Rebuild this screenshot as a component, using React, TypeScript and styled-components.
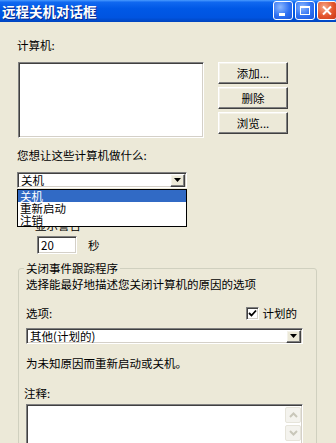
import React from "react";
import styled, { createGlobalStyle } from "styled-components";

const Global = createGlobalStyle`
  html, body { margin: 0; padding: 0; background: #ECE9D8; }
  body {
    font-family: "Noto Sans CJK SC", "Liberation Sans", sans-serif;
    font-size: 11.5px;
    color: #000;
  }
  * { box-sizing: border-box; }
`;

const Window = styled.div`
  width: 336px;
  height: 443px;
  overflow: hidden;
  background: #ECE9D8;
  display: flex;
  flex-direction: column;
`;

const TitleBar = styled.div`
  height: 22px;
  flex: none;
  display: flex;
  justify-content: space-between;
  padding-left: 2px;
  background: linear-gradient(
    to bottom,
    #4A9BFF 0%,
    #1068F0 10%,
    #0058E6 40%,
    #0054E0 80%,
    #0044BE 100%
  );
`;

const Title = styled.span`
  color: #fff;
  font-weight: bold;
  font-size: 13.5px;
  line-height: 22px;
  text-shadow: 1px 1px #0A2A8A;
  white-space: nowrap;
`;

const Controls = styled.div`
  display: flex;
  gap: 2px;
  margin-top: 1px;
  margin-right: -1px;
`;

const CtlButton = styled.div<{ $close?: boolean }>`
  width: 20px;
  height: 19px;
  border: 1px solid #fff;
  border-radius: 3px;
  display: flex;
  align-items: center;
  justify-content: center;
  background: ${(p) =>
    p.$close
      ? "radial-gradient(circle at 35% 30%, #F6A888 0%, #E4552C 55%, #C8391A 100%)"
      : "radial-gradient(circle at 35% 30%, #8CB8FF 0%, #2E70F2 55%, #1A56DA 100%)"};
`;

const Body = styled.div`
  padding: 16px 0 0 17px;
  display: flex;
  flex-direction: column;
`;

const Label = styled.div<{ $mt?: number; $ml?: number }>`
  height: 14px;
  line-height: 14px;
  white-space: nowrap;
  margin-top: ${(p) => p.$mt ?? 0}px;
  margin-left: ${(p) => p.$ml ?? 0}px;
`;

const sunken = `
  border: 1px solid;
  border-color: #808080 #fff #fff #808080;
  box-shadow: inset 1px 1px #404040, inset -1px -1px #D4D0C8;
  background: #fff;
`;

const raised = `
  border: 1px solid;
  border-color: #fff #404040 #404040 #fff;
  box-shadow: inset -1px -1px #808080, inset 1px 1px #F4F2EA;
  background: #ECE9D8;
`;

const ListRow = styled.div`
  display: flex;
  margin-top: 10px;
  margin-left: 1px;
`;

const ListBox = styled.div`
  ${sunken}
  width: 186px;
  height: 76px;
`;

const ButtonColumn = styled.div`
  display: flex;
  flex-direction: column;
  gap: 3px;
  margin-left: 14px;
`;

const PushButton = styled.div`
  ${raised}
  width: 70px;
  height: 22px;
  display: flex;
  align-items: center;
  justify-content: center;
  line-height: 14px;
  white-space: nowrap;
`;

const ComboWrap = styled.div<{ $mt?: number; $w: number }>`
  position: relative;
  width: ${(p) => p.$w}px;
  margin-top: ${(p) => p.$mt ?? 0}px;
`;

const Combo = styled.div`
  ${sunken}
  height: 16px;
  display: flex;
  align-items: center;
  padding-left: 3px;
  padding-right: 1px;
  line-height: 14px;
  white-space: nowrap;
`;

const ComboText = styled.span`
  flex: 1;
`;

const ArrowButton = styled.div`
  ${raised}
  width: 15px;
  height: 13px;
  display: flex;
  align-items: center;
  justify-content: center;
`;

const DropList = styled.div`
  position: absolute;
  left: 0;
  top: calc(100% + 1px);
  width: 100%;
  border: 1px solid #000;
  background: #fff;
  z-index: 2;
`;

const DropItem = styled.div<{ $active?: boolean }>`
  height: 12px;
  line-height: 12px;
  padding-left: 2px;
  white-space: nowrap;
  background: ${(p) => (p.$active ? "#316AC5" : "#fff")};
  color: ${(p) => (p.$active ? "#fff" : "#000")};
`;

const SecondsRow = styled.div`
  display: flex;
  align-items: center;
  margin-top: 4px;
  margin-left: 20px;
`;

const NumberBox = styled.div`
  ${sunken}
  width: 40px;
  height: 18px;
  line-height: 14px;
  padding: 1px 3px;
`;

const Unit = styled.span`
  margin-left: 11px;
  line-height: 14px;
`;

const Group = styled.fieldset`
  margin: 7px 0 0 1px;
  width: 299px;
  padding: 0 13px 0 7px;
  border: 1px solid #D0D0BF;
  border-radius: 3px;
  display: flex;
  flex-direction: column;
  min-width: 0;
`;

const Legend = styled.legend`
  padding: 0 2px;
  margin-left: -2px;
  line-height: 14px;
  height: 14px;
  white-space: nowrap;
`;

const SplitRow = styled.div`
  display: flex;
  justify-content: space-between;
  align-items: center;
  margin-top: 15px;
  padding-right: 6px;
  height: 14px;
`;

const CheckGroup = styled.div`
  display: flex;
  align-items: center;
  gap: 4px;
  line-height: 14px;
`;

const CheckBox = styled.div`
  ${sunken}
  width: 13px;
  height: 13px;
  display: flex;
  align-items: center;
  justify-content: center;
`;

const NoteArea = styled.div`
  ${sunken}
  margin-top: 4px;
  height: 44px;
  display: flex;
  justify-content: flex-end;
  padding: 2px 1px 0 0;
  flex: none;
`;

const ScrollBar = styled.div`
  width: 16px;
  display: flex;
  flex-direction: column;
  gap: 2px;
`;

const ScrollBtn = styled.div`
  width: 16px;
  height: 16px;
  border: 1px solid #E6E4DA;
  border-radius: 2px;
  background: #F4F3EE;
  display: flex;
  align-items: center;
  justify-content: center;
`;

const Triangle = () => (
  <svg width="7" height="4" viewBox="0 0 7 4">
    <path d="M0 0h7L3.5 4z" fill="#000" />
  </svg>
);

const Chevron = ({ up }: { up?: boolean }) => (
  <svg width="9" height="6" viewBox="0 0 9 6">
    <path
      d={up ? "M1 5L4.5 1.5 8 5" : "M1 1l3.5 3.5L8 1"}
      fill="none"
      stroke="#C9C7BA"
      strokeWidth="2"
    />
  </svg>
);

export default function App() {
  return (
    <>
      <Global />
      <Window>
        <TitleBar>
          <Title>远程关机对话框</Title>
          <Controls>
            <CtlButton>
              <svg width="14" height="13" viewBox="0 0 14 13">
                <rect x="3" y="9" width="6" height="3" fill="#fff" />
              </svg>
            </CtlButton>
            <CtlButton>
              <svg width="14" height="13" viewBox="0 0 14 13">
                <rect x="2.5" y="2.5" width="9" height="8" fill="none" stroke="#fff" strokeWidth="1" />
                <rect x="2" y="2" width="10" height="2" fill="#fff" />
              </svg>
            </CtlButton>
            <CtlButton $close>
              <svg width="14" height="13" viewBox="0 0 14 13">
                <path d="M3 2.5l8 8M11 2.5l-8 8" stroke="#fff" strokeWidth="2" />
              </svg>
            </CtlButton>
          </Controls>
        </TitleBar>
        <Body>
          <Label>计算机:</Label>
          <ListRow>
            <ListBox />
            <ButtonColumn>
              <PushButton>添加...</PushButton>
              <PushButton>删除</PushButton>
              <PushButton>浏览...</PushButton>
            </ButtonColumn>
          </ListRow>
          <Label $mt={10}>您想让这些计算机做什么:</Label>
          <ComboWrap $mt={10} $w={170}>
            <Combo>
              <ComboText>关机</ComboText>
              <ArrowButton>
                <Triangle />
              </ArrowButton>
            </Combo>
            <DropList>
              <DropItem $active>关机</DropItem>
              <DropItem>重新启动</DropItem>
              <DropItem>注销</DropItem>
            </DropList>
          </ComboWrap>
          <Label $mt={30} $ml={18}>显示警告</Label>
          <SecondsRow>
            <NumberBox>20</NumberBox>
            <Unit>秒</Unit>
          </SecondsRow>
          <Group>
            <Legend>关闭事件跟踪程序</Legend>
            <Label $mt={2}>选择能最好地描述您关闭计算机的原因的选项</Label>
            <SplitRow>
              <span>选项:</span>
              <CheckGroup>
                <CheckBox>
                  <svg width="9" height="9" viewBox="0 0 9 9">
                    <path d="M1 4l2.5 2.5L8 1.5" fill="none" stroke="#000" strokeWidth="1.8" />
                  </svg>
                </CheckBox>
                <span>计划的</span>
              </CheckGroup>
            </SplitRow>
            <ComboWrap $mt={8} $w={277}>
              <Combo>
                <ComboText>其他(计划的)</ComboText>
                <ArrowButton>
                  <Triangle />
                </ArrowButton>
              </Combo>
            </ComboWrap>
            <Label $mt={12}>为未知原因而重新启动或关机。</Label>
            <Label $mt={16} $ml={-2}>注释:</Label>
            <NoteArea>
              <ScrollBar>
                <ScrollBtn>
                  <Chevron up />
                </ScrollBtn>
                <ScrollBtn>
                  <Chevron />
                </ScrollBtn>
              </ScrollBar>
            </NoteArea>
          </Group>
        </Body>
      </Window>
    </>
  );
}
